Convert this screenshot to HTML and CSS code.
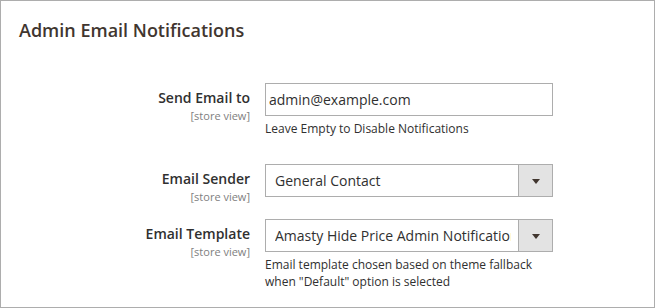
FILE: index.html
```html
<!DOCTYPE html>
<html lang="en">
<head>
    <meta charset="UTF-8">
    <title>Admin Email Notifications</title>
    <link rel="stylesheet" href="styles.css">
</head>
<body>
    <div class="panel">
        <h2 class="panel-title">Admin Email Notifications</h2>

        <form class="config-form">
            <div class="field-row">
                <div class="field-label">
                    <label for="sendTo">Send Email to</label>
                    <span class="scope">[store view]</span>
                </div>
                <div class="field-control">
                    <input type="text" id="sendTo" class="text-input" value="admin@example.com">
                    <p class="note">Leave Empty to Disable Notifications</p>
                </div>
            </div>

            <div class="field-row">
                <div class="field-label">
                    <label for="sender">Email Sender</label>
                    <span class="scope">[store view]</span>
                </div>
                <div class="field-control">
                    <div class="select-wrap">
                        <select id="sender" class="select-input">
                            <option>General Contact</option>
                        </select>
                        <span class="select-btn"></span>
                    </div>
                </div>
            </div>

            <div class="field-row">
                <div class="field-label">
                    <label for="template">Email Template</label>
                    <span class="scope">[store view]</span>
                </div>
                <div class="field-control">
                    <div class="select-wrap">
                        <select id="template" class="select-input">
                            <option>Amasty Hide Price Admin Notification (Default)</option>
                        </select>
                        <span class="select-btn"></span>
                    </div>
                    <p class="note">Email template chosen based on theme fallback<br>when "Default" option is selected</p>
                </div>
            </div>
        </form>
    </div>
</body>
</html>
```

FILE: styles.css
```css
body { margin: 0; font-family: "Open Sans", "Liberation Sans", sans-serif; color: #303030; background: #fff; }
.panel { width: 655px; height: 308px; box-sizing: border-box; border: 1px solid #adadad; padding: 19px 0 0 18px; overflow: hidden; }
.panel-title { margin: 0; font-size: 18px; line-height: 20px; font-weight: 600; color: #41362f; }
.config-form { margin-top: 43px; }
.field-row { display: flex; align-items: flex-start; margin-bottom: 17px; }
.field-label { width: 231px; height: 33px; text-align: right; padding-top: 5px; padding-right: 15px; box-sizing: content-box; }
.field-label label { display: block; font-size: 14px; line-height: 20px; font-weight: 600; color: #303030; }
.scope { display: block; font-size: 11px; line-height: 15px; color: #808080; }
.field-control { width: 288px; }
.text-input { display: block; width: 100%; height: 33px; box-sizing: border-box; border: 1px solid #adadad; padding: 0 3px; font-family: inherit; font-size: 14px; color: #303030; outline: none; }
.select-wrap { position: relative; height: 33px; }
.select-input { display: block; width: 100%; height: 33px; box-sizing: border-box; border: 1px solid #adadad; border-radius: 0; padding: 0 41px 0 9px; font-family: inherit; font-size: 14px; color: #303030; background: #fff; appearance: none; -webkit-appearance: none; outline: none; }
.select-btn { position: absolute; top: 1px; right: 1px; width: 33px; height: 31px; background: #e3e3e3; border-left: 1px solid #adadad; }
.select-btn::after { content: ""; position: absolute; left: 13px; top: 14px; border-left: 4px solid transparent; border-right: 4px solid transparent; border-top: 5px solid #41362f; }
.note { margin: 4px 0 10px; font-size: 12px; line-height: 17px; color: #303030; }
```
